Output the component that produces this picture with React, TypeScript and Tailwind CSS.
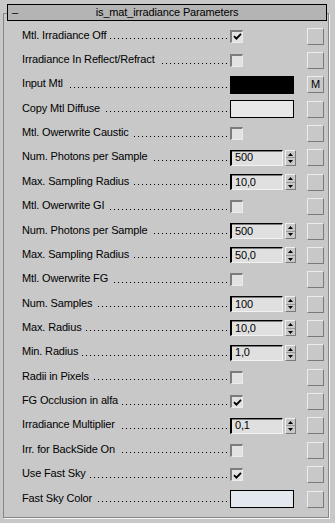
import React from "react";

type Row = {
  label: string;
  type: "check" | "swatch" | "spin";
  checked?: boolean;
  color?: string;
  value?: string;
  m?: boolean;
};

const rows: Row[] = [
  { label: "Mtl. Irradiance Off", type: "check", checked: true },
  { label: "Irradiance In Reflect/Refract", type: "check" },
  { label: "Input Mtl", type: "swatch", color: "#000000", m: true },
  { label: "Copy Mtl Diffuse", type: "swatch", color: "#e8e8e8" },
  { label: "Mtl. Owerwrite Caustic", type: "check" },
  { label: "Num. Photons per Sample", type: "spin", value: "500" },
  { label: "Max. Sampling Radius", type: "spin", value: "10,0" },
  { label: "Mtl. Owerwrite GI", type: "check" },
  { label: "Num. Photons per Sample", type: "spin", value: "500" },
  { label: "Max. Sampling Radius", type: "spin", value: "50,0" },
  { label: "Mtl. Owerwrite FG", type: "check" },
  { label: "Num. Samples", type: "spin", value: "100" },
  { label: "Max. Radius", type: "spin", value: "10,0" },
  { label: "Min. Radius", type: "spin", value: "1,0" },
  { label: "Radii in Pixels", type: "check" },
  { label: "FG Occlusion in alfa", type: "check", checked: true },
  { label: "Irradiance Multiplier", type: "spin", value: "0,1" },
  { label: "Irr. for BackSide On", type: "check" },
  { label: "Use Fast Sky", type: "check", checked: true },
  { label: "Fast Sky Color", type: "swatch", color: "#e3e8ee" },
];

function CheckBox({ checked }: { checked?: boolean }) {
  return (
    <div className="w-[13px] h-[13px] border-t-2 border-l-2 border-t-[#7c7c7c] border-l-[#7c7c7c] border-b border-r border-b-[#ececec] border-r-[#ececec] bg-[#e2e2e2] flex items-center justify-center">
      {checked && (
        <svg width="9" height="9" viewBox="0 0 9 9">
          <path d="M1 4.2 L3.4 6.6 L8 1.8" stroke="#000" strokeWidth="1.9" fill="none" />
        </svg>
      )}
    </div>
  );
}

function Spinner({ value }: { value?: string }) {
  return (
    <div className="flex items-center">
      <div className="w-[53px] h-[16px] border-t border-l-2 border-t-black border-l-black border-b border-r border-b-[#f2f2f2] border-r-[#f2f2f2] bg-[#e0e0e0] shadow-[inset_0_1px_0_#7a7a7a] flex items-center pl-[3px] leading-none">
        {value}
      </div>
      <div className="ml-[2px] w-[11px] h-[16px] flex flex-col border-t border-l border-t-[#f0f0f0] border-l-[#f0f0f0] border-b border-r border-b-[#7a7a7a] border-r-[#7a7a7a]">
        <div className="flex-1 flex items-center justify-center border-b border-b-[#9a9a9a]">
          <svg width="5" height="3" viewBox="0 0 5 3">
            <path d="M2.5 0 L5 3 L0 3 Z" fill="#000" />
          </svg>
        </div>
        <div className="flex-1 flex items-center justify-center">
          <svg width="5" height="3" viewBox="0 0 5 3">
            <path d="M0 0 L5 0 L2.5 3 Z" fill="#000" />
          </svg>
        </div>
      </div>
    </div>
  );
}

function Swatch({ color }: { color?: string }) {
  return <div className="w-[64px] h-[18px] border border-black" style={{ backgroundColor: color }} />;
}

export default function App() {
  return (
    <div
      className="w-[335px] h-[523px] bg-[#c8c8c8] pt-[4px] text-[11px] text-black tracking-[-0.15px] overflow-hidden"
      style={{ fontFamily: '"Liberation Sans", Arial, sans-serif' }}
    >
      <div className="relative z-10 ml-[7px] w-[320px] h-[17px] border border-black bg-[#b4b4b4] flex items-center">
        <span className="absolute left-[4px] top-[1px] leading-[13px]">–</span>
        <div className="flex-1 text-center leading-none">is_mat_irradiance Parameters</div>
      </div>
      <div className="-mt-[8px] ml-[3px] w-[326px] h-[505px] border border-[#868686] shadow-[1px_1px_0_#f4f4f4] pt-[10px]">
        {rows.map((r, i) => (
          <div key={i} className="flex items-center h-[24.37px] pl-[18px]">
            <div className="w-[208px] h-full flex items-center pr-[2px]">
              <span className="whitespace-nowrap mr-[4px] -mt-[2px] leading-none">{r.label}</span>
              <div className="flex-1 h-[1px] mt-[5px] bg-[repeating-linear-gradient(270deg,transparent_0_1px,#000_1px_2px,transparent_2px_4px)]" />
            </div>
            <div className="w-[77px] flex items-center">
              {r.type === "check" && <CheckBox checked={r.checked} />}
              {r.type === "spin" && <Spinner value={r.value} />}
              {r.type === "swatch" && <Swatch color={r.color} />}
            </div>
            <div className="w-[17px] h-[17px] border-t border-l border-t-[#ececec] border-l-[#ececec] border-b border-r border-b-[#7a7a7a] border-r-[#7a7a7a] flex items-center justify-center leading-none text-[11px]">
              {r.m ? "M" : ""}
            </div>
          </div>
        ))}
      </div>
    </div>
  );
}
